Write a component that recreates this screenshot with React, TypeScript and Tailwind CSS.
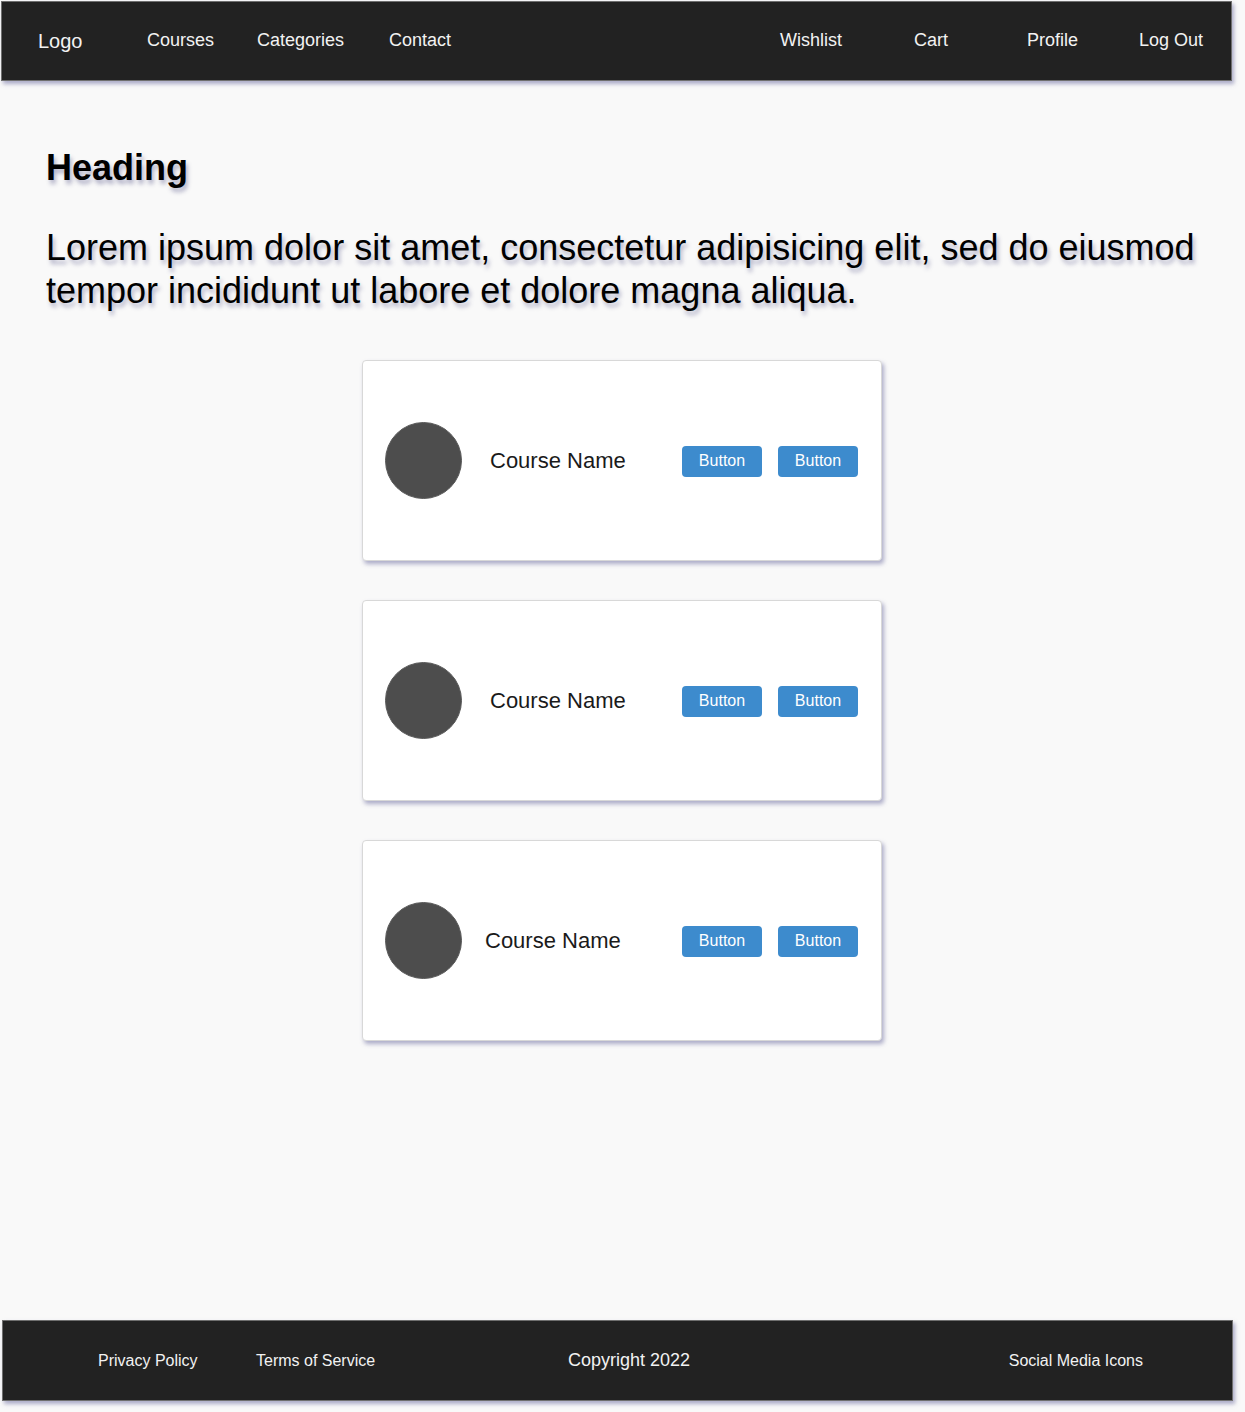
import React from "react";

const shadow = "shadow-[2px_3px_4px_rgba(110,110,160,0.55)]";

function Card({ nameClass }: { nameClass: string }) {
  return (
    <div className={`w-[520px] h-[201px] bg-white border border-[#d8d8d8] rounded-[4px] flex items-center pl-[22px] pr-[23px] ${shadow}`}>
      <div className="w-[77px] h-[77px] rounded-full bg-[#4d4d4d] border border-[#5a5a5a] shrink-0" />
      <div className={`text-[22px] text-[#1a1a1a] ${nameClass}`}>Course Name</div>
      <div className="ml-auto flex gap-[16px] pt-[1px]">
        <button className="w-[80px] h-[31px] bg-[#3d8bcd] text-white text-[16px] rounded-[4px]">Button</button>
        <button className="w-[80px] h-[31px] bg-[#3d8bcd] text-white text-[16px] rounded-[4px]">Button</button>
      </div>
    </div>
  );
}

export default function App() {
  return (
    <div
      className="bg-[#f9f9f9] min-h-[1412px] w-[1245px] flex flex-col"
      style={{ fontFamily: '"Liberation Sans", Arial, sans-serif' }}
    >
      <nav className={`mt-[1px] ml-[1px] w-[1231px] h-[80px] pb-[2px] bg-[#222222] border border-[#6f6f6f] text-[#f2f2f2] flex items-center ${shadow}`}>
        <span className="ml-[36px] text-[20px] w-[109px] pt-[2px]">Logo</span>
        <span className="text-[18px] w-[110px]">Courses</span>
        <span className="text-[18px] w-[132px]">Categories</span>
        <span className="text-[18px]">Contact</span>
        <span className="ml-auto text-[18px] w-[134px]">Wishlist</span>
        <span className="text-[18px] w-[113px]">Cart</span>
        <span className="text-[18px] w-[112px]">Profile</span>
        <span className="text-[18px] mr-[28px]">Log Out</span>
      </nav>

      <main className="flex-1 px-[46px] [text-shadow:2px_4px_4px_rgba(90,90,140,0.45)]">
        <h1 className="mt-[66px] text-[36px] font-bold text-black leading-[42px]">Heading</h1>
        <p className="mt-[37px] text-[36px] leading-[43px] text-black">
          Lorem ipsum dolor sit amet, consectetur adipisicing elit, sed do eiusmod tempor incididunt ut labore et dolore magna aliqua.
        </p>
      </main>
      <div className="absolute left-0 top-[360px] w-[1244px] flex flex-col items-center gap-[39px]">
        <Card nameClass="ml-[28px]" />
        <Card nameClass="ml-[28px]" />
        <Card nameClass="ml-[23px]" />
      </div>

      <footer className={`mb-[11px] ml-[2px] w-[1231px] h-[81px] bg-[#222222] border border-[#6f6f6f] text-[#f2f2f2] flex items-center ${shadow}`}>
        <span className="ml-[95px] text-[16px] w-[158px]">Privacy Policy</span>
        <span className="text-[16px] w-[312px]">Terms of Service</span>
        <span className="text-[18px]">Copyright 2022</span>
        <span className="ml-auto mr-[89px] text-[16px]">Social Media Icons</span>
      </footer>
    </div>
  );
}
